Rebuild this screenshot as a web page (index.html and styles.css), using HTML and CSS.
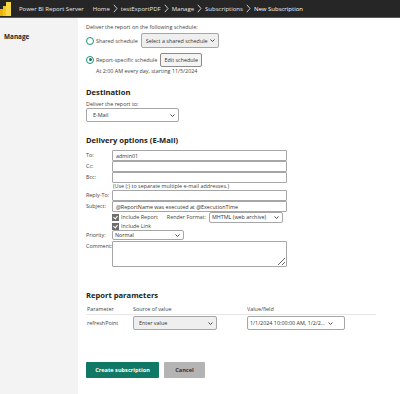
FILE: index.html
```html
<!DOCTYPE html>
<html lang="en">
<head>
  <meta charset="UTF-8" />
  <title>New Subscription - Power BI Report Server</title>
  <link rel="stylesheet" href="styles.css">
</head>
<body>
  <div class="topbar">
    <svg class="logo" width="11" height="14" viewBox="0 0 11 14">
      <rect x="0" y="7" width="4" height="7" fill="#e8b10d"/>
      <rect x="3" y="4" width="4" height="10" fill="#f2c811"/>
      <rect x="6" y="0" width="5" height="14" fill="#f8d84a"/>
    </svg>
    <span class="product">Power BI Report Server</span>
    <nav class="crumbs">
      <span>Home</span>
      <svg class="chev" width="5" height="9" viewBox="0 0 5 9"><path d="M0.8 0.8 L4 4.5 L0.8 8.2" fill="none" stroke="#ddd" stroke-width="0.9"/></svg>
      <span>testExportPDF</span>
      <svg class="chev" width="5" height="9" viewBox="0 0 5 9"><path d="M0.8 0.8 L4 4.5 L0.8 8.2" fill="none" stroke="#ddd" stroke-width="0.9"/></svg>
      <span>Manage</span>
      <svg class="chev" width="5" height="9" viewBox="0 0 5 9"><path d="M0.8 0.8 L4 4.5 L0.8 8.2" fill="none" stroke="#ddd" stroke-width="0.9"/></svg>
      <span>Subscriptions</span>
      <svg class="chev" width="5" height="9" viewBox="0 0 5 9"><path d="M0.8 0.8 L4 4.5 L0.8 8.2" fill="none" stroke="#ddd" stroke-width="0.9"/></svg>
      <span class="current">New Subscription</span>
    </nav>
  </div>

  <div class="page">
    <aside class="sidebar">
      <div class="side-title">Manage</div>
    </aside>

    <main class="content">
      <p class="intro">Deliver the report on the following schedule:</p>

      <div class="sched-row first">
        <span class="radio"></span>
        <span class="sched-label">Shared schedule</span>
        <span class="sel-wrap">
          <select class="sel sel-shared"><option>Select a shared schedule</option></select>
          <svg class="arrow" width="5" height="3" viewBox="0 0 5 3"><path d="M0.5 0.5 L2.5 2.5 L4.5 0.5" fill="none" stroke="#333" stroke-width="0.9"/></svg>
        </span>
      </div>
      <div class="sched-row">
        <span class="radio checked"></span>
        <span class="sched-label">Report-specific schedule</span>
        <button class="btn-edit">Edit schedule</button>
      </div>
      <p class="sched-note">At 2:00 AM every day, starting 11/5/2024</p>

      <h2 class="section-title dest">Destination</h2>
      <p class="intro">Deliver the report to:</p>
      <span class="sel-wrap">
        <select class="sel sel-dest"><option>E-Mail</option></select>
        <svg class="arrow" width="5" height="3" viewBox="0 0 5 3"><path d="M0.5 0.5 L2.5 2.5 L4.5 0.5" fill="none" stroke="#333" stroke-width="0.9"/></svg>
      </span>

      <h2 class="section-title opts">Delivery options (E-Mail)</h2>
      <div class="mail-form">
        <label>To:</label><input class="field" type="text" value="admin01">
        <label>Cc:</label><input class="field" type="text">
        <label>Bcc:</label><input class="field" type="text">
        <span></span><span class="hint">(Use (;) to separate multiple e-mail addresses.)</span>
        <label>Reply-To:</label><input class="field" type="text">
        <label>Subject:</label><input class="field" type="text" value="@ReportName was executed at @ExecutionTime">
        <span></span>
        <div class="check-row">
          <span class="check"></span><span>Include Report</span>
          <span class="render-label">Render Format:</span>
          <span class="sel-wrap">
            <select class="sel sel-render"><option>MHTML (web archive)</option></select>
            <svg class="arrow" width="5" height="3" viewBox="0 0 5 3"><path d="M0.5 0.5 L2.5 2.5 L4.5 0.5" fill="none" stroke="#333" stroke-width="0.9"/></svg>
          </span>
        </div>
        <span></span>
        <div class="check-row link">
          <span class="check"></span><span>Include Link</span>
        </div>
        <label>Priority:</label>
        <div>
          <span class="sel-wrap">
            <select class="sel sel-priority"><option>Normal</option></select>
            <svg class="arrow" width="5" height="3" viewBox="0 0 5 3"><path d="M0.5 0.5 L2.5 2.5 L4.5 0.5" fill="none" stroke="#333" stroke-width="0.9"/></svg>
          </span>
        </div>
        <label>Comment:</label><textarea class="comment"></textarea>
      </div>

      <h2 class="section-title params">Report parameters</h2>
      <table class="param-table">
        <thead>
          <tr><th class="c1">Parameter</th><th class="c2">Source of value</th><th>Value/field</th></tr>
        </thead>
        <tbody>
          <tr>
            <td>refreshPoint</td>
            <td>
              <span class="sel-wrap">
                <select class="sel sel-source"><option>Enter value</option></select>
                <svg class="arrow" width="5" height="3" viewBox="0 0 5 3"><path d="M0.5 0.5 L2.5 2.5 L4.5 0.5" fill="none" stroke="#333" stroke-width="0.9"/></svg>
              </span>
            </td>
            <td>
              <span class="sel-wrap">
                <select class="sel sel-value"><option>1/1/2024 10:00:00 AM, 1/2/2...</option></select>
                <svg class="arrow value-arrow" width="5" height="3" viewBox="0 0 5 3"><path d="M0.5 0.5 L2.5 2.5 L4.5 0.5" fill="none" stroke="#333" stroke-width="0.9"/></svg>
              </span>
            </td>
          </tr>
        </tbody>
      </table>

      <div class="actions">
        <button class="btn-primary">Create subscription</button>
        <button class="btn-cancel">Cancel</button>
      </div>
    </main>
  </div>
</body>
</html>
```

FILE: styles.css
```css
body {
  margin: 0;
  font-family: 'Open Sans', 'Noto Sans', sans-serif;
  font-size: 5.4px;
  color: #333;
  background-color: #ffffff;
  height: 394px;
  display: flex;
  flex-direction: column;
  overflow: hidden;
}

.topbar {
  height: 17px;
  background-color: #262626;
  border-bottom: 1px solid #5a5a5a;
  display: flex;
  align-items: center;
  color: #e6e6e6;
  font-size: 6px;
  flex-shrink: 0;
}

.logo {
  margin: 0 8px 0 0;
}

.product {
  margin-right: 9px;
}

.crumbs {
  display: flex;
  align-items: center;
  gap: 3px;
}

.crumbs .current {
  color: #ffffff;
}

.page {
  flex: 1;
  display: flex;
}

.sidebar {
  width: 78px;
  background-color: #f3f3f3;
  flex-shrink: 0;
}

.side-title {
  font-weight: bold;
  font-size: 6.4px;
  color: #222;
  padding: 14px 0 0 4px;
}

.content {
  padding: 5px 0 0 8px;
  flex: 1;
}

.intro {
  margin: 0;
  line-height: 8px;
  color: #444;
}

.sched-row {
  display: flex;
  align-items: center;
  height: 15px;
  margin-top: 4px;
}

.sched-row.first {
  margin-top: 2px;
}

.radio {
  width: 8px;
  height: 8px;
  border: 1px solid #1b8f78;
  border-radius: 50%;
  box-sizing: border-box;
  margin-right: 2px;
  position: relative;
}

.radio.checked::after {
  content: '';
  position: absolute;
  left: 1.5px;
  top: 1.5px;
  width: 3px;
  height: 3px;
  border-radius: 50%;
  background-color: #117865;
}

.sched-label {
  color: #444;
  margin-right: 3px;
}

.sel-wrap {
  position: relative;
  display: inline-flex;
  vertical-align: top;
}

.sel-wrap .arrow {
  position: absolute;
  right: 4px;
  top: 50%;
  margin-top: -1.5px;
  pointer-events: none;
}

.sel-wrap .value-arrow {
  right: 12px;
}

.sel {
  appearance: none;
  -webkit-appearance: none;
  font-family: 'Open Sans', 'Noto Sans', sans-serif;
  font-size: 5.4px;
  color: #333;
  border: 1px solid #a6a6a6;
  border-radius: 2px;
  background-color: #ffffff;
  padding: 0 0 0 2px;
  margin: 0;
  box-sizing: border-box;
}

.sel-shared {
  width: 78px;
  height: 15px;
  background-color: #efefef;
  padding-left: 4px;
}

.btn-edit {
  font-family: 'Open Sans', 'Noto Sans', sans-serif;
  font-size: 5.4px;
  color: #333;
  height: 14px;
  width: 42px;
  padding: 0;
  border: 1px solid #8a8a8a;
  border-radius: 2px;
  background-color: #f4f4f4;
}

.sched-note {
  margin: 0;
  padding-left: 10px;
  line-height: 8px;
  color: #444;
}

.section-title {
  margin: 0;
  font-size: 7.6px;
  font-weight: bold;
  color: #222;
  line-height: 10px;
}

.section-title.dest {
  margin-top: 12px;
  margin-bottom: 3px;
}

.sel-dest {
  width: 93px;
  height: 14px;
  padding-left: 6px;
}

.section-title.opts {
  margin-top: 13px;
  margin-bottom: 5px;
}

.mail-form {
  display: grid;
  grid-template-columns: 26px 175px;
  color: #444;
}

.mail-form label {
  line-height: 11px;
  white-space: nowrap;
}

.field {
  height: 11px;
  width: 175px;
  box-sizing: border-box;
  border: 1px solid #a6a6a6;
  border-radius: 1px;
  padding: 0 3px;
  margin: 0;
  font-family: 'Open Sans', 'Noto Sans', sans-serif;
  font-size: 5.4px;
  color: #333;
}

.hint {
  line-height: 7px;
  padding-left: 1px;
}

.check-row {
  display: flex;
  align-items: center;
  height: 10px;
}

.check-row.link {
  height: 8px;
}

.check {
  width: 5px;
  height: 5px;
  background-color: #6e6e6e;
  border: 1px solid #6e6e6e;
  margin-right: 2px;
  position: relative;
}

.check::after {
  content: '';
  position: absolute;
  left: 1px;
  top: 0;
  width: 2px;
  height: 3px;
  border: solid #ffffff;
  border-width: 0 1px 1px 0;
  transform: rotate(40deg);
}

.render-label {
  margin: 0 3px 0 9px;
}

.sel-render {
  width: 74px;
  height: 11px;
}

.sel-priority {
  width: 72px;
  height: 10px;
}

.comment {
  width: 175px;
  height: 26px;
  box-sizing: border-box;
  border: 1px solid #a6a6a6;
  border-radius: 1px;
  margin: 0;
  resize: both;
}

.section-title.params {
  margin-top: 23px;
  margin-bottom: 4px;
}

.param-table {
  border-collapse: collapse;
  width: 290px;
  color: #444;
}

.param-table th {
  font-weight: normal;
  text-align: left;
  padding: 0 0 0 1px;
  height: 10px;
  border-bottom: 1px solid #e6e6e6;
}

.param-table .c1 {
  width: 45px;
}

.param-table .c2 {
  width: 113px;
}

.param-table td {
  padding: 1px 0 0 1px;
  height: 14px;
}

.sel-source {
  width: 84px;
  height: 14px;
  background-color: #efefef;
  padding-left: 5px;
}

.sel-value {
  width: 98px;
  height: 14px;
}

.actions {
  display: flex;
  gap: 5px;
  margin-top: 32px;
}

.btn-primary {
  font-family: 'Open Sans', 'Noto Sans', sans-serif;
  font-size: 5.6px;
  font-weight: bold;
  color: #ffffff;
  background-color: #117865;
  border: none;
  border-radius: 1px;
  height: 16px;
  width: 73px;
  padding: 0;
}

.btn-cancel {
  font-family: 'Open Sans', 'Noto Sans', sans-serif;
  font-size: 5.6px;
  font-weight: bold;
  color: #333;
  background-color: #b4b4b4;
  border: none;
  border-radius: 1px;
  height: 16px;
  width: 41px;
  padding: 0;
}
```
